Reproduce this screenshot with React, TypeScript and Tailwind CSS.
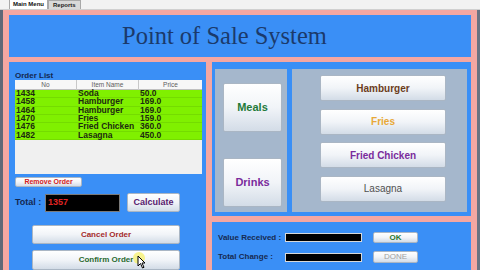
import React from 'react';

const orders = [
  { no: '1434', item: 'Soda', price: '50.0' },
  { no: '1458', item: 'Hamburger', price: '169.0' },
  { no: '1464', item: 'Hamburger', price: '169.0' },
  { no: '1470', item: 'Fries', price: '159.0' },
  { no: '1476', item: 'Fried Chicken', price: '360.0' },
  { no: '1482', item: 'Lasagna', price: '450.0' },
];

const foods = [
  { name: 'Hamburger', cls: 'text-[#6b3c1c] font-bold' },
  { name: 'Fries', cls: 'text-[#e8a838] font-bold' },
  { name: 'Fried Chicken', cls: 'text-[#7a2c9c] font-bold' },
  { name: 'Lasagna', cls: 'text-[#505050]' },
];

const btn =
  'flex items-center justify-center bg-linear-to-b from-white via-[#f1f4f8] to-[#d3dce7] border border-[#aab6c4] rounded-[2px]';

export default function App() {
  return (
    <div className="relative w-[480px] h-[270px] overflow-hidden bg-[#efefef] flex flex-col font-['Liberation_Sans',Arial,sans-serif]">
      {/* tabs */}
      <div className="h-[10px] flex items-end pl-[9px] bg-[#f2f2f2] border-b border-[#d0d0d0]">
        <div className="h-[10px] px-[3px] flex items-center bg-white border border-b-0 border-[#a8a8a8] text-[6px] font-bold text-[#101010]">
          Main Menu
        </div>
        <div className="h-[9px] px-[4px] flex items-center bg-[#d9d9d9] border border-b-0 border-[#a8a8a8] text-[6px] font-bold text-[#202020]">
          Reports
        </div>
      </div>

      <div className="flex-1 flex">
        <div className="w-[3px] bg-[#5f6877]" />
        <div className="flex-1 bg-[#f4a7a2] px-[6px] pt-[5px] flex flex-col gap-[5px]">
          {/* header */}
          <div className="h-[42px] shrink-0 bg-[#3a8ff6] flex items-center pl-[113px]">
            <h1 className="font-['Liberation_Serif','Times_New_Roman',serif] text-[24.5px] leading-none text-[#1b3a6b]">
              Point of Sale System
            </h1>
          </div>

          <div className="flex-1 flex gap-[6px]">
            {/* left panel */}
            <div className="w-[197px] bg-[#3a8ff6] pt-[9px] pl-[6px] pr-[4px] flex flex-col">
              <div className="text-[8px] leading-[9px] font-bold text-[#142850]">Order List</div>
              <div className="h-[94px] bg-[#f0f0f0] flex flex-col">
                <div className="h-[10px] grid grid-cols-[62px_62px_1fr] bg-[#f7f7f7] border-b border-[#c0c0c0] text-[6.5px] text-[#606060]">
                  <div className="flex items-center justify-center border-r border-[#c8c8c8]">No</div>
                  <div className="flex items-center justify-center border-r border-[#c8c8c8]">Item Name</div>
                  <div className="flex items-center justify-center">Price</div>
                </div>
                {orders.map((o) => (
                  <div
                    key={o.no}
                    className="h-[8.33px] grid grid-cols-[62px_62px_1fr] bg-[#80f000] border-b border-[#74dc00] text-[8.5px] leading-[7.5px] font-bold text-[#1c2a10]"
                  >
                    <div className="pl-[1px]">{o.no}</div>
                    <div className="pl-[1px]">{o.item}</div>
                    <div className="pl-[1px]">{o.price}</div>
                  </div>
                ))}
              </div>
              <div className={`${btn} mt-[3px] w-[67px] h-[10px] text-[7px] font-bold text-[#d42020]`}>Remove Order</div>
              <div className="mt-[6px] flex items-center">
                <span className="w-[30px] text-[9px] font-bold text-[#142850]">Total :</span>
                <div className="w-[75px] h-[18px] bg-black border border-[#7a7a7a] flex items-center pl-[2px] text-[9px] font-bold text-[#e02424]">
                  1357
                </div>
                <div className={`${btn} ml-[7px] w-[53px] h-[19px] text-[9px] font-bold text-[#58206e]`}>Calculate</div>
              </div>
              <div className={`${btn} mt-[13px] ml-[17px] w-[148px] h-[19px] text-[8px] font-bold text-[#a42a2a]`}>Cancel Order</div>
              <div className={`${btn} mt-[6px] ml-[17px] w-[148px] h-[20px] text-[8px] font-bold text-[#2a6a30]`}>Confirm Order</div>
            </div>

            {/* right column */}
            <div className="flex-1 flex flex-col gap-[6px]">
              <div className="h-[154px] shrink-0 bg-[#3a8ff6] pt-[7px] pl-[3px] pr-[4px] pb-[4px] flex gap-[5px]">
                <div className="w-[72px] bg-[#a5b7cc] pt-[14px] pl-[8px] flex flex-col gap-[26px]">
                  <div className={`${btn} w-[59px] h-[49px] text-[11px] font-bold text-[#1f7a3a]`}>Meals</div>
                  <div className={`${btn} w-[59px] h-[49px] text-[11px] font-bold text-[#7a2c9c]`}>Drinks</div>
                </div>
                <div className="flex-1 bg-[#a5b7cc] pt-[6px] pl-[28px] flex flex-col gap-[7.5px]">
                  {foods.map((f) => (
                    <div key={f.name} className={`${btn} w-[126px] h-[26px] text-[10px] ${f.cls}`}>
                      {f.name}
                    </div>
                  ))}
                </div>
              </div>

              <div className="h-[60px] shrink-0 bg-[#3a8ff6] pt-[10px] pl-[6px] flex flex-col gap-[8px]">
                <div className="flex items-center h-[11px]">
                  <span className="w-[67px] text-[8px] font-bold text-[#162a52]">Value Received :</span>
                  <div className="w-[77px] h-[9px] bg-black border border-[#d8d8d8]" />
                  <div className={`${btn} ml-[11px] w-[45px] h-[11px] text-[8px] font-bold text-[#2a7a30]`}>OK</div>
                </div>
                <div className="flex items-center h-[12px]">
                  <span className="w-[67px] text-[8px] font-bold text-[#162a52]">Total Change :</span>
                  <div className="w-[77px] h-[9px] bg-black border border-[#d8d8d8]" />
                  <div className={`${btn} ml-[11px] w-[45px] h-[12px] text-[8px] text-[#a0a0a0]`}>DONE</div>
                </div>
              </div>
            </div>
          </div>
        </div>
        <div className="w-[3px] bg-[#6a7382]" />
      </div>

      {/* mouse cursor */}
      <div className="absolute left-[133px] top-[252px] w-[12px] h-[12px] rounded-full bg-[#f6f060]/70" />
      <svg className="absolute left-[137px] top-[255px]" width="9" height="14" viewBox="0 0 9 14">
        <path d="M1 1 L1 11 L3.5 8.5 L5.5 13 L7 12.3 L5 8 L8 8 Z" fill="white" stroke="black" strokeWidth="1" />
      </svg>
    </div>
  );
}
